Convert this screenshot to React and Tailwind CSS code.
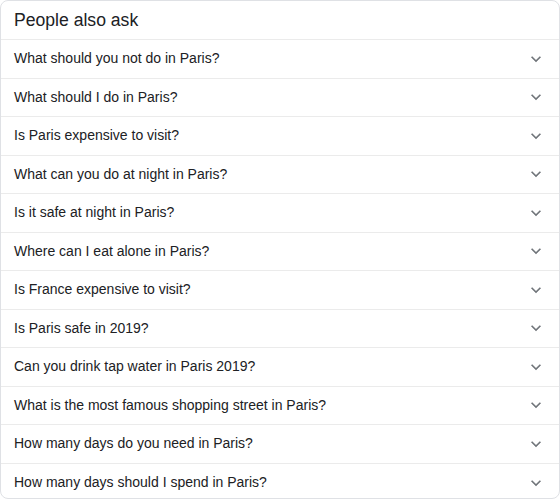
import React from "react";

const questions = [
  "What should you not do in Paris?",
  "What should I do in Paris?",
  "Is Paris expensive to visit?",
  "What can you do at night in Paris?",
  "Is it safe at night in Paris?",
  "Where can I eat alone in Paris?",
  "Is France expensive to visit?",
  "Is Paris safe in 2019?",
  "Can you drink tap water in Paris 2019?",
  "What is the most famous shopping street in Paris?",
  "How many days do you need in Paris?",
  "How many days should I spend in Paris?",
];

const Chevron = () => (
  <svg width="20" height="20" viewBox="0 0 24 24" fill="#70757a">
    <path d="M16.59 8.59L12 13.17 7.41 8.59 6 10l6 6 6-6z" />
  </svg>
);

const App = () => {
  return (
    <div className="w-[560px] h-[500px] bg-white font-['Liberation_Sans',Arial,sans-serif] text-[#202124]">
      <div className="border border-[#dfe1e5] rounded-lg overflow-hidden h-[499px]">
        <div className="h-[39px] flex items-center pl-[13px] text-[17.6px] border-b border-[#ebebeb]">
          People also ask
        </div>
        {questions.map((q, index) => (
          <div
            key={index}
            className="h-[38.5px] flex items-center justify-between pl-[13px] pr-[13px] text-[14px] border-b border-[#ebebeb] last:border-b-0"
          >
            <span>{q}</span>
            <Chevron />
          </div>
        ))}
      </div>
    </div>
  );
};

export default App;
